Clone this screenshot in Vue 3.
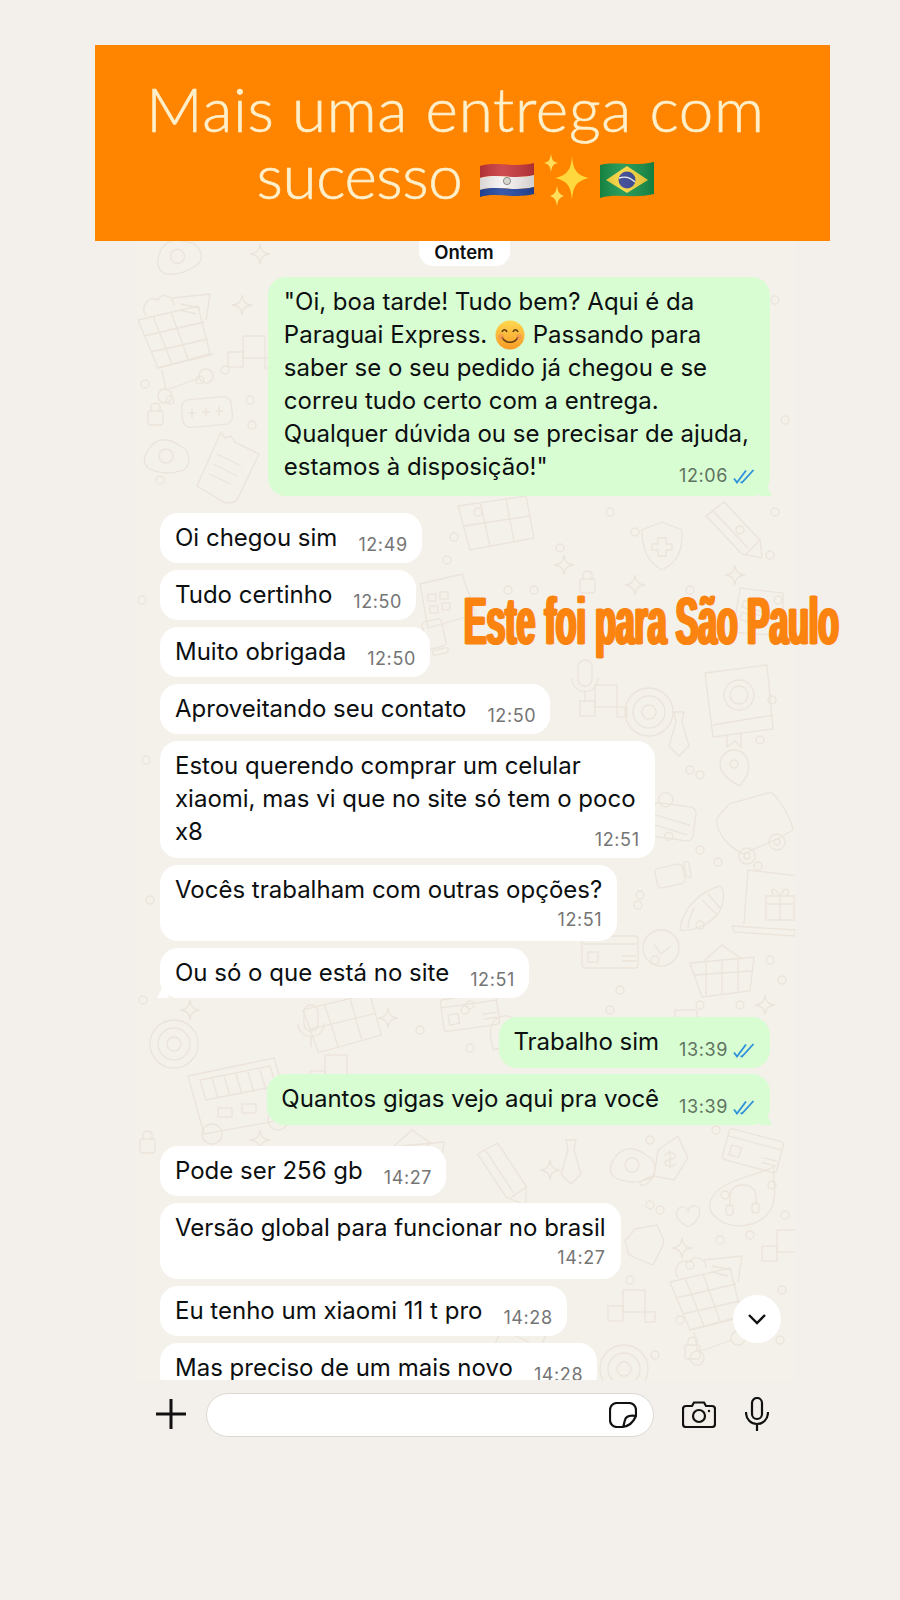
<template>
  <div class="page">
    <header class="banner">
      <h1 class="banner__title">
        Mais uma entrega com<br />
        <span class="banner__row">
          <span class="banner__word">sucesso</span>
          <svg class="flag" viewBox="0 0 54 38">
            <defs>
              <linearGradient id="shade" x1="0" y1="0" x2="1" y2="0">
                <stop offset="0" stop-color="#000" stop-opacity=".12" />
                <stop offset=".4" stop-color="#fff" stop-opacity=".1" />
                <stop offset="1" stop-color="#000" stop-opacity=".15" />
              </linearGradient>
            </defs>
            <path fill="#c8383c" d="M0 5C16 0 34 7 54 2V14C34 19 16 12 0 17Z" />
            <path fill="#f6f2f2" d="M0 17C16 12 34 19 54 14V26C34 31 16 24 0 29Z" />
            <path fill="#24479f" d="M0 29C16 24 34 31 54 26V33C34 38 16 31 0 36Z" />
            <path fill="url(#shade)" d="M0 5C16 0 34 7 54 2V33C34 38 16 31 0 36Z" />
            <circle cx="27" cy="20" r="3.6" fill="#d8d8d0" stroke="#777" stroke-width=".8" />
          </svg>
          <svg class="sparkles" viewBox="0 0 48 52">
            <path fill="#ffd83d" d="M29 2C30 15 33 21 46 24C33 27 30 33 29 46C28 33 25 27 12 24C25 21 28 15 29 2Z" />
            <path fill="#ffdf5c" d="M8 0C9 6 10 8 15 9C10 10 9 12 8 18C7 12 6 10 1 9C6 8 7 6 8 0Z" />
            <path fill="#ffdf5c" d="M14 32C15 38 16 40 21 42C16 44 15 46 14 52C13 46 12 44 7 42C12 40 13 38 14 32Z" />
          </svg>
          <svg class="flag" viewBox="0 0 54 38">
            <path fill="#17924a" d="M0 4C16 0 34 6 54 1V33C34 38 16 32 0 37Z" />
            <path fill="#f7d53b" d="M27 5L48 19L27 32L6 19Z" />
            <circle cx="27" cy="19" r="8.5" fill="#32408f" />
            <path d="M19 17C25 15 31 17 35 21" fill="none" stroke="#f2f2f2" stroke-width="1.4" />
            <path fill="url(#shade)" d="M0 4C16 0 34 6 54 1V33C34 38 16 32 0 37Z" />
          </svg>
        </span>
      </h1>
    </header>

    <section class="chat">
      <svg class="doodles" viewBox="136 241 659 1139" aria-hidden="true">
        <defs>
          <g id="d-cart">
            <path d="M0 28L60 14L72 62L20 76Z M15 24L34 72 M33 20L50 67 M6 44L66 30 M13 60L70 47" />
            <path d="M20 76L76 62M24 78L28 98M28 98L62 86" />
            <circle cx="27" cy="104" r="7" /><circle cx="68" cy="84" r="7" />
            <path d="M8 24C2 14 10 4 20 8C24 0 36 4 36 14M34 6L72 2L68 28" />
            <path d="M42 12L62 16M42 18L58 22" />
          </g>
          <g id="d-grid">
            <path d="M2 10L70 0L78 42L14 54Z M24 6L34 50 M50 3L58 45 M8 30L74 20" />
          </g>
          <g id="d-shield">
            <path d="M20 0L40 8C41 28 36 40 20 48C6 40 0 28 0 8Z" />
            <path d="M16 16H24V22H30V28H24V34H16V28H10V22H16Z" />
          </g>
          <g id="d-pencil">
            <path d="M0 14L18 0L54 38L56 56L36 52Z M6 8L42 46 M40 52L54 38" />
          </g>
          <g id="d-lock">
            <rect x="0" y="9" width="15" height="14" rx="2" />
            <path d="M3 9V5C3 0 12 0 12 5V9" />
          </g>
          <g id="d-egg">
            <path d="M4 14C14 -2 28 4 36 10C46 14 48 28 40 34C28 38 14 38 4 32C-2 26 0 20 4 14Z" />
            <circle cx="22" cy="20" r="7" />
          </g>
          <g id="d-receipt">
            <path d="M24 0L28 6L34 4L38 10L62 22L40 68C36 72 26 72 20 66L0 54Z" />
            <path d="M20 22L44 34M16 32L40 44M12 42L34 52" />
          </g>
          <g id="d-pass">
            <rect x="0" y="4" width="50" height="28" rx="8" transform="rotate(-5 25 18)" />
            <path d="M10 14V24M6 19H14M24 13V23M20 18H28M37 12V22M33 17H41" />
          </g>
          <g id="d-tag">
            <path d="M18 14L38 0L48 22L34 44L14 40Z" />
            <path d="M30 14V32M25 20C26 15 35 16 35 20C35 25 25 22 25 27C25 31 34 31 36 27" />
            <path d="M14 40C6 42 -2 46 0 48C4 52 10 46 14 40" />
          </g>
          <g id="d-headset">
            <path d="M22 18C40 10 52 8 66 2C64 14 70 28 64 42C54 62 26 66 10 54C-4 44 0 28 22 18Z" />
            <path d="M22 42V32C22 16 46 16 48 30V40" />
            <rect x="18" y="40" width="7" height="10" rx="3" /><rect x="44" y="38" width="7" height="10" rx="3" />
          </g>
          <g id="d-heart">
            <path d="M12 22C2 16 -2 10 2 4C6 0 10 2 12 6C14 0 20 -1 23 3C26 10 20 18 12 22Z" />
          </g>
          <g id="d-star">
            <path d="M10 0C11 7 13 9 20 10C13 11 11 13 10 20C9 13 7 11 0 10C7 9 9 7 10 0Z" />
          </g>
          <g id="d-book">
            <path d="M0 8L62 0L68 64L8 72Z M8 60L68 50 M22 70V82L30 76L36 82V68" />
            <circle cx="34" cy="30" r="15" /><circle cx="34" cy="30" r="9" />
          </g>
          <g id="d-tie">
            <path d="M6 0H16L14 10L21 34L11 44L1 34L8 10Z" />
          </g>
          <g id="d-pin">
            <path d="M14 0C26 0 30 12 28 22C26 30 20 34 20 36C12 32 2 26 0 16C0 6 6 0 14 0Z" />
            <circle cx="14" cy="14" r="4" />
          </g>
          <g id="d-suitcase">
            <rect x="0" y="12" width="44" height="34" rx="6" />
            <path d="M0 24L40 30M0 34L38 40" /><circle cx="12" cy="8" r="7" /><circle cx="20" cy="44" r="4" />
          </g>
          <g id="d-wagon">
            <path d="M2 26L14 12L56 0C64 6 76 26 78 38L60 48L28 62C16 56 0 42 2 26Z" />
            <circle cx="32" cy="64" r="8" /><circle cx="32" cy="64" r="3" />
            <circle cx="62" cy="50" r="8" /><circle cx="62" cy="50" r="3" />
          </g>
          <g id="d-corn">
            <path d="M0 44C2 20 24 4 40 0C46 4 44 22 36 30C26 40 12 46 0 44Z" />
            <path d="M22 14L36 28M28 8L40 22M14 22C10 30 8 36 8 42" />
          </g>
          <g id="d-laptop">
            <path d="M12 54L16 0L66 6M0 56L64 60L62 66L2 62Z" />
            <path d="M34 26H62V50H34ZM48 26V50M34 34H62M48 26C40 14 38 20 42 26M48 26C54 14 60 20 54 26" />
          </g>
          <g id="d-basket">
            <path d="M0 18L64 12L60 46L12 52Z M16 16V50 M32 14V50 M48 14V48 M4 30L62 26" />
            <path d="M14 16L32 0L52 14" />
          </g>
          <g id="d-card">
            <rect x="0" y="0" width="56" height="32" rx="3" />
            <path d="M0 8H56M40 20H54M40 25H54" /><rect x="6" y="16" width="10" height="10" />
          </g>
          <g id="d-check">
            <circle cx="18" cy="18" r="18" /><path d="M11 14L18 24L28 16" />
          </g>
          <g id="d-jar">
            <rect x="0" y="6" width="28" height="20" rx="4" transform="rotate(-12 14 16)" />
            <rect x="29" y="2" width="5" height="16" rx="2" transform="rotate(-12 30 10)" />
          </g>
          <g id="d-foodtruck">
            <path d="M0 18L86 0L98 40L104 60L16 76Z" />
            <path d="M12 22L82 8L88 28L18 42Z M24 20L30 40 M36 18L42 38 M48 16L54 36 M60 14L66 34 M72 12L78 32" />
            <rect x="30" y="50" width="14" height="9" /><rect x="54" y="46" width="14" height="9" />
            <circle cx="24" cy="76" r="10" /><circle cx="90" cy="62" r="10" />
          </g>
          <g id="d-squares">
            <rect x="0" y="16" width="15" height="15" /><rect x="15" y="0" width="22" height="22" />
            <rect x="37" y="22" width="10" height="10" />
          </g>
          <g id="d-register">
            <path d="M0 14L42 4L56 44L8 58Z" />
            <rect x="8" y="24" width="8" height="7" /><rect x="20" y="22" width="8" height="7" />
            <rect x="10" y="36" width="8" height="7" /><rect x="22" y="33" width="8" height="7" />
          </g>
          <g id="d-mic">
            <rect x="8" y="0" width="14" height="26" rx="7" /><path d="M2 18C2 36 28 36 28 18M15 32V42" />
          </g>
          <g id="d-wheel">
            <circle cx="24" cy="24" r="24" /><circle cx="24" cy="24" r="16" /><circle cx="24" cy="24" r="7" />
          </g>
          <g id="d-blob">
            <path d="M10 4L32 0C36 10 40 14 38 20L28 40L4 30L0 16Z" />
          </g>
        </defs>
        <g class="doodles__set">
          <use v-for="(d, i) in doodles" :key="i" :href="'#d-' + d[0]" :transform="`translate(${d[1]} ${d[2]}) rotate(${d[3] || 0})`" />
          <circle v-for="(c, i) in dots" :key="'c' + i" :cx="c[0]" :cy="c[1]" :r="c[2] || 4" />
        </g>
      </svg>

      <div class="chat__list">
        <span class="day">Ontem</span>
        <div
          v-for="(m, i) in messages"
          :key="i"
          class="bubble"
          :class="['bubble--' + m.from, 'bubble--' + (m.kind || 'inline'), { 'bubble--spaced': m.spaced, 'bubble--tail': m.tail }]"
        >
          <p class="bubble__text">
            <template v-if="m.emoji">
              "Oi, boa tarde! Tudo bem? Aqui é da<br />
              Paraguai Express.
              <svg class="smiley" viewBox="0 0 30 30">
                <defs>
                  <linearGradient id="smile" x1="0" y1="0" x2="0" y2="1">
                    <stop offset="0" stop-color="#ffd84f" />
                    <stop offset="1" stop-color="#f79a26" />
                  </linearGradient>
                </defs>
                <circle cx="15" cy="15" r="14.5" fill="url(#smile)" />
                <path d="M7 12C8 9 11 9 12 12M18 12C19 9 22 9 23 12" fill="none" stroke="#5b3a14" stroke-width="1.6" />
                <path d="M7 17C10 24 20 24 23 17" fill="none" stroke="#5b3a14" stroke-width="1.6" />
                <circle cx="6" cy="17" r="3" fill="#f58a5a" opacity=".5" /><circle cx="24" cy="17" r="3" fill="#f58a5a" opacity=".5" />
              </svg>
              Passando para<br />
            </template>
            <span class="bubble__lines">{{ m.text }}</span>
          </p>
          <span class="bubble__meta">
            <span>{{ m.time }}</span>
            <svg v-if="m.from === 'out'" class="ticks" viewBox="0 0 23 15">
              <path d="M1 9.5L4 13.5L13 1.5M7.5 13L9 13.5L20.5 1" fill="none" stroke="#2b8fdc" stroke-width="1.8" />
            </svg>
          </span>
        </div>
      </div>

      <button type="button" class="scroll-down" aria-label="Descer">
        <svg viewBox="0 0 20 12" width="20" height="12">
          <path d="M2 2L10 10L18 2" fill="none" stroke="#111" stroke-width="2.4" />
        </svg>
      </button>
    </section>

    <p class="stamp">Este foi para São Paulo</p>

    <footer class="composer">
      <svg class="composer__plus" viewBox="0 0 30 30">
        <path d="M15 0V30M0 15H30" stroke="#111" stroke-width="3" fill="none" />
      </svg>
      <div class="composer__input">
        <svg viewBox="0 0 28 26" width="28" height="26">
          <path d="M8 1H20C24 1 27 4 27 8V14C24 21 19 25 12 25H8C4 25 1 22 1 18V8C1 4 4 1 8 1Z M27 14C22 13 17 14 16 18C15 21 15 23 14 25" fill="none" stroke="#111" stroke-width="2.2" />
        </svg>
      </div>
      <svg class="composer__camera" viewBox="0 0 34 27">
        <path d="M4 5H10L12 1.5H22L24 5H30C32 5 33 6 33 8V23C33 25 32 26 30 26H4C2 26 1 25 1 23V8C1 6 2 5 4 5Z" fill="none" stroke="#111" stroke-width="2.2" />
        <circle cx="17" cy="15" r="6" fill="none" stroke="#111" stroke-width="2.2" />
        <circle cx="27" cy="10" r="1.2" fill="#111" />
      </svg>
      <svg class="composer__mic" viewBox="0 0 24 34">
        <rect x="7" y="1" width="10" height="21" rx="5" fill="none" stroke="#111" stroke-width="2.2" />
        <path d="M1 15C1 31 23 31 23 15M12 27V34" fill="none" stroke="#111" stroke-width="2.2" />
      </svg>
    </footer>
  </div>
</template>

<script setup>
const messages = [
  { from: 'out', kind: 'long', emoji: true, time: '12:06', tail: true, text: 'saber se o seu pedido já chegou e se\ncorreu tudo certo com a entrega.\nQualquer dúvida ou se precisar de ajuda,\nestamos à disposição!"' },
  { from: 'in', time: '12:49', spaced: true, text: 'Oi chegou sim' },
  { from: 'in', time: '12:50', text: 'Tudo certinho' },
  { from: 'in', time: '12:50', text: 'Muito obrigada' },
  { from: 'in', time: '12:50', text: 'Aproveitando seu contato' },
  { from: 'in', kind: 'long', time: '12:51', text: 'Estou querendo comprar um celular\nxiaomi, mas vi que no site só tem o poco\nx8' },
  { from: 'in', kind: 'stack', time: '12:51', text: 'Vocês trabalham com outras opções?' },
  { from: 'in', time: '12:51', tail: true, text: 'Ou só o que está no site' },
  { from: 'out', time: '13:39', spaced: true, text: 'Trabalho sim' },
  { from: 'out', time: '13:39', tail: true, text: 'Quantos gigas vejo aqui pra você' },
  { from: 'in', time: '14:27', spaced: true, text: 'Pode ser 256 gb' },
  { from: 'in', kind: 'stack', time: '14:27', text: 'Versão global para funcionar no brasil' },
  { from: 'in', time: '14:28', text: 'Eu tenho um xiaomi 11 t pro' },
  { from: 'in', time: '14:28', text: 'Mas preciso de um mais novo' },
]

// name, x, y, rotation (page coordinates, the svg viewBox starts at the panel corner)
const doodles = [
  ['cart', 138, 292], ['lock', 148, 402], ['pass', 182, 394], ['egg', 144, 436], ['receipt', 197, 432],
  ['squares', 228, 336], ['star', 250, 244], ['star', 232, 295], ['egg', 150, 245, -20],
  ['grid', 456, 496], ['shield', 642, 522], ['pencil', 706, 502], ['lock', 580, 570], ['star', 625, 575],
  ['star', 554, 555], ['star', 725, 565], ['register', 420, 570], ['register', 745, 575, 20],
  ['jar', 450, 620, 90], ['mic', 570, 660], ['squares', 580, 685], ['wheel', 625, 688], ['book', 705, 665],
  ['tie', 668, 712], ['pin', 720, 750], ['suitcase', 655, 790, 8], ['wagon', 715, 792], ['jar', 656, 860],
  ['corn', 680, 886], ['laptop', 732, 870], ['basket', 690, 945], ['card', 582, 936], ['check', 643, 930],
  ['star', 755, 995], ['foodtruck', 188, 1058], ['star', 180, 1000], ['star', 378, 1008], ['wheel', 150, 1020, 0],
  ['squares', 310, 1055], ['mic', 296, 1005], ['star', 250, 1130], ['basket', 380, 1130], ['card', 440, 1000, -8],
  ['tag', 640, 1136], ['headset', 708, 1165], ['heart', 676, 1205], ['blob', 625, 1225], ['star', 672, 1238],
  ['squares', 762, 1230], ['egg', 610, 1145], ['squares', 608, 1290], ['lock', 685, 1336], ['cart', 670, 1254],
  ['wheel', 600, 1345], ['card', 730, 1128, 15], ['pin', 505, 1010, 45], ['squares', 660, 1010], ['tie', 560, 1140],
  ['pencil', 480, 1140, 10], ['receipt', 495, 1290], ['star', 540, 1160], ['grid', 300, 1000, -5], ['lock', 140, 1130],
]

const dots = [
  [478, 512], [454, 537], [447, 560], [508, 590], [534, 590], [560, 548], [610, 512], [635, 532], [690, 590],
  [740, 530], [775, 512], [770, 555], [778, 600], [772, 700], [790, 640], [690, 770], [700, 775], [760, 740],
  [700, 850], [718, 862], [758, 866], [640, 895], [638, 905], [655, 960], [700, 925], [770, 960], [782, 980],
  [610, 1010], [740, 1005], [700, 1005], [465, 1010], [470, 1048], [420, 1030], [430, 1100], [380, 1120],
  [650, 1140], [680, 1120], [716, 1130], [650, 1205], [660, 1210], [725, 1195], [750, 1235], [720, 1240], [690, 1265],
  [630, 1280], [680, 1320], [655, 1355], [772, 1185], [785, 1215], [170, 400], [200, 380], [145, 384],
  [225, 370], [250, 400], [252, 425], [160, 480], [180, 520], [142, 600], [146, 760], [150, 900], [143, 1000],
  [775, 300], [785, 420], [782, 1290], [780, 1340], [440, 960], [620, 990], [470, 1005],
]
</script>

<style>
html, body { background: #f3f0eb; }
</style>

<style scoped>
.page {
  position: relative;
  width: 900px;
  height: 1600px;
  padding-top: 45px;
  box-sizing: border-box;
  overflow: hidden;
  background: #f3f0eb;
  font-family: Inter, "Liberation Sans", sans-serif;
  color: #0c0f10;
}
.banner {
  width: 735px;
  height: 196px;
  margin-left: 95px;
  background: #ff8500;
  position: relative;
  z-index: 2;
  display: flex;
  justify-content: center;
  padding-right: 14px;
  box-sizing: border-box;
}
.banner__title {
  margin: 0;
  padding-top: 30px;
  font-family: Lato, sans-serif;
  font-weight: 300;
  font-size: 62px;
  line-height: 67px;
  letter-spacing: 0.7px;
  text-align: center;
  color: #fff0cc;
  -webkit-text-stroke: 0.6px #fff0cc;
}
.banner__row { display: inline-flex; align-items: center; gap: 9px; }
.banner__word { letter-spacing: -0.4px; margin-right: 9px; }
.flag { width: 54px; height: 38px; margin-top: 8px; }
.sparkles { width: 48px; height: 52px; margin-top: 8px; }
.chat {
  position: relative;
  width: 659px;
  height: 1139px;
  margin-left: 136px;
  overflow: hidden;
  background: #f4f0ea;
}
.doodles {
  position: absolute;
  inset: 0;
  width: 659px;
  height: 1139px;
}
.doodles__set {
  fill: none;
  stroke: #ebe4da;
  stroke-width: 1.3;
}
.chat__list {
  position: relative;
  display: flex;
  flex-direction: column;
  align-items: flex-start;
  gap: 7px;
  padding: 0 25px 0 24px;
}
.day {
  align-self: center;
  margin: 0 0 4px -2px;
  width: 91px;
  height: 25px;
  border-radius: 0 0 14px 14px;
  background: #fff;
  font-size: 18.5px;
  font-weight: 600;
  line-height: 23px;
  text-align: center;
}
.bubble {
  position: relative;
  box-sizing: border-box;
  border-radius: 18px;
  background: #fff;
  padding: 8px 14px 8px 15px;
  font-size: 24px;
  line-height: 33px;
  flex: none;
}
.bubble--out { align-self: flex-end; background: #d8fdd2; }
.bubble--out + .bubble--out { margin-top: -1px; }
.bubble--spaced { margin-top: 12px; }
.bubble--out.bubble--long + .bubble--in { margin-top: 10px; }
.bubble--out.bubble--inline + .bubble--in { margin-top: 14px; }
.bubble--inline { display: flex; gap: 21px; height: 50px; }
.bubble--out.bubble--inline { height: 51px; padding-left: 14px; gap: 20px; }
.bubble--stack { padding-right: 15px; }
.bubble--long { padding-right: 19px; padding-bottom: 10px; }
.bubble--out.bubble--long { padding-left: 16px; padding-right: 21px; padding-bottom: 13px; }
.bubble__text { margin: 0; }
.bubble__lines { white-space: pre-line; }
.bubble__meta {
  display: flex;
  align-items: center;
  justify-content: flex-end;
  gap: 5px;
  font-size: 18px;
  line-height: 22px;
  letter-spacing: 0.6px;
  color: #757575;
}
.bubble--out .bubble__meta { color: #5f7360; }
.bubble--inline .bubble__meta { align-self: flex-end; margin-bottom: -1px; }
.bubble--stack .bubble__meta { margin-top: 0; height: 27px; }
.bubble--long .bubble__meta { position: absolute; right: 15px; bottom: 7px; }
.bubble--out.bubble--long .bubble__meta { right: 14px; bottom: 9px; }
.bubble--tail::after {
  content: "";
  position: absolute;
  bottom: 0;
  width: 12px;
  height: 12px;
  background: inherit;
}
.bubble--in.bubble--tail::after { left: -3px; clip-path: polygon(0 100%, 50% 0, 100% 100%); }
.bubble--out.bubble--tail::after { right: -2px; clip-path: polygon(0 100%, 50% 0, 100% 100%); }
.smiley { width: 30px; height: 30px; vertical-align: -7px; margin: 0 1px; }
.ticks { width: 23px; height: 15px; }
.stamp {
  position: absolute;
  left: 464px;
  top: 586px;
  z-index: 3;
  margin: 0;
  white-space: nowrap;
  font-family: "Liberation Sans", sans-serif;
  font-weight: 700;
  font-size: 66px;
  line-height: 70px;
  color: #fb8410;
  -webkit-text-stroke: 1.2px #fb8410;
  text-shadow: 3px 0 0 #fb8410, -3px 0 0 #fb8410;
  transform: scaleX(0.511);
  transform-origin: left center;
}
.scroll-down {
  position: absolute;
  left: 597px;
  top: 1054px;
  width: 48px;
  height: 48px;
  padding: 0;
  border: none;
  border-radius: 50%;
  background: #fff;
  display: flex;
  align-items: center;
  justify-content: center;
}
.composer {
  margin-left: 136px;
  width: 659px;
  height: 120px;
  padding: 13px 0 0 20px;
  box-sizing: border-box;
  display: flex;
  align-items: flex-start;
  background: #f3f0eb;
}
.composer__plus { width: 30px; height: 30px; margin: 6px 20px 0 0; }
.composer__input {
  width: 448px;
  height: 44px;
  box-sizing: border-box;
  border: 1px solid #dcd9d3;
  border-radius: 22px;
  background: #fff;
  display: flex;
  align-items: center;
  justify-content: flex-end;
  padding-right: 16px;
}
.composer__camera { width: 34px; height: 27px; margin: 8px 0 0 28px; }
.composer__mic { width: 24px; height: 34px; margin: 4px 0 0 29px; }
</style>
